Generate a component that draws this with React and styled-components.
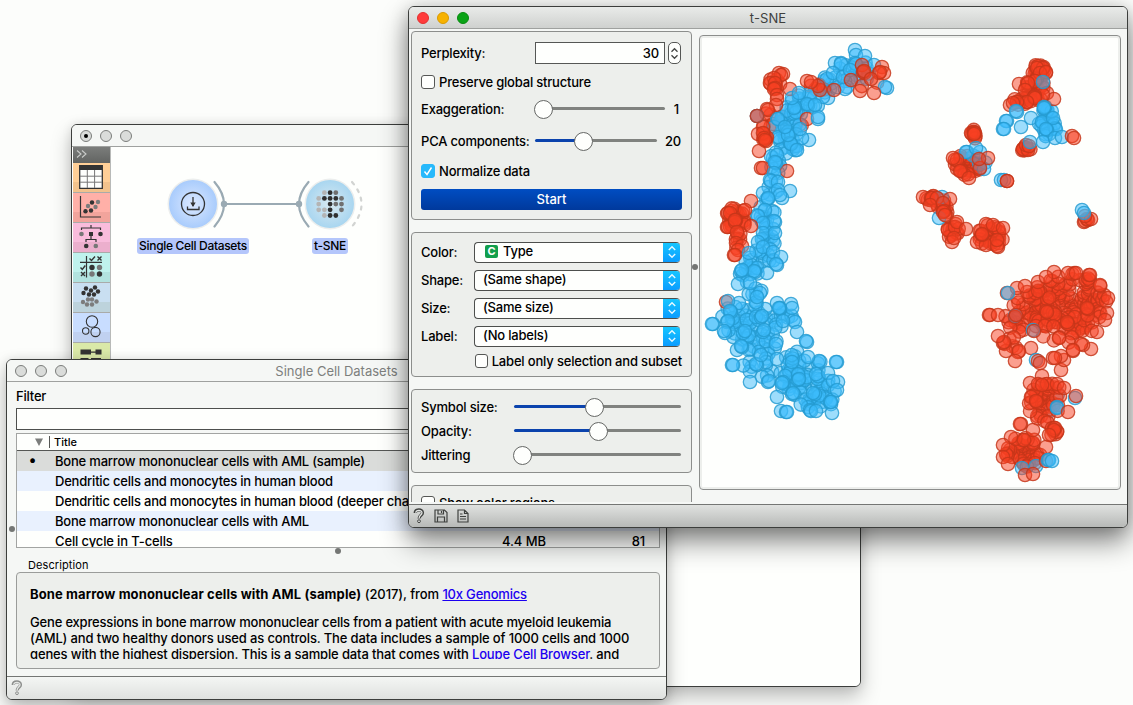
import React from "react";
import styled, { createGlobalStyle } from "styled-components";

const GlobalStyle = createGlobalStyle`
  * { box-sizing: border-box; }
  html, body { margin: 0; height: 100%; overflow: hidden; }
  body {
    background: #fcfdfb;
    color: #000;
    font: 500 13px/16px Inter, "Liberation Sans", sans-serif;
    letter-spacing: -0.2px;
  }
`;

const Desktop = styled.main`
  position: relative;
  width: 1133px;
  height: 705px;
  overflow: hidden;
`;

const Window = styled.section`
  position: absolute;
  left: ${(p) => p.$x}px;
  top: ${(p) => p.$y}px;
  width: ${(p) => p.$w}px;
  height: ${(p) => p.$h}px;
  display: flex;
  flex-direction: column;
  border: 1px solid #3c3e3c;
  border-radius: 6px;
  background: #f5f7f5;
  overflow: hidden;
  box-shadow: ${(p) =>
    p.$active ? "0 14px 28px rgba(0,0,0,.46), 0 2px 18px rgba(0,0,0,.2)" : "0 10px 20px rgba(0,0,0,.25), 0 0 10px rgba(0,0,0,.1)"};
`;

const TitleBar = styled.header`
  position: relative;
  display: flex;
  align-items: center;
  flex: none;
  height: 22px;
  gap: 8px;
  padding-left: 8px;
  border-bottom: 1px solid #9fa19f;
  background: ${(p) => (p.$active ? "linear-gradient(#e9ebe9, #cfd1cf)" : "#f5f7f5")};
`;

const Light = styled.i`
  display: grid;
  place-items: center;
  width: 12px;
  height: 12px;
  border-radius: 50%;
  background: ${(p) => p.$color || "#dadcda"};
  border: 1px solid ${(p) => p.$edge || "#7b7d7b"};
  &::after {
    content: "";
    width: 4px;
    height: 4px;
    border-radius: 50%;
    background: ${(p) => (p.$dot ? "#000" : "transparent")};
  }
`;

const WindowTitle = styled.h1`
  position: absolute;
  inset: 3px 0 0;
  margin: 0;
  text-align: center;
  font-size: 13px;
  font-weight: 400;
  letter-spacing: ${(p) => p.$track || 0}px;
  color: ${(p) => (p.$dim ? "#7d7f7d" : "#3e403e")};
`;

/* Workflow window */
const WorkArea = styled.div`
  display: flex;
  flex: 1;
  padding-left: 1px;
  background: #fefffd;
`;
const ToolDock = styled.nav`
  width: 38px;
  border-right: 1px solid #b8bab8;
`;
const Expander = styled.div`
  height: 16px;
  padding: 3px 0 0 3px;
  background: linear-gradient(#7b7d7b, #626462);
  svg { display: block; }
`;
const ToolButton = styled.div`
  display: grid;
  place-items: center;
  height: 30px;
  padding: 0 2px 1px 0;
  border-bottom: 1px solid #a9aba9;
  background: ${(p) => `linear-gradient(${p.$a} 0 66%, ${p.$b} 66%)`};
  svg { display: block; }
`;
const Workflow = styled.div`
  position: relative;
  flex: 1;
`;
const LinkArt = styled.svg`
  display: block;
`;
const NodeLabel = styled.span`
  position: absolute;
  top: 91px;
  left: ${(p) => p.$x}px;
  width: ${(p) => p.$w}px;
  height: 16px;
  line-height: 15px;
  border-radius: 3px;
  background: #b4c6fb;
  text-align: center;
  white-space: nowrap;
  font-size: 12px;
  letter-spacing: ${(p) => p.$track}px;
`;

/* Datasets window */
const DataBody = styled.div`
  position: relative;
  display: flex;
  flex-direction: column;
  flex: 1;
  padding: 6px 6px 0 9px;
`;
const FilterInput = styled.div`
  height: 22px;
  margin-top: 4px;
  border: 1px solid #4d4f4d;
  background: #fefffd;
`;
const FilterLabel = styled.label`
  height: 16px;
`;
const Table = styled.div`
  height: 115px;
  margin-top: 3px;
  border: 1px solid #a2a4a2;
  background: #fefffd;
  overflow: hidden;
`;
const TableHead = styled.div`
  display: flex;
  align-items: center;
  height: 17px;
  padding-left: 18px;
  font-size: 11px;
  letter-spacing: 0;
  border-bottom: 1px solid #555755;
  svg { margin-right: 6px; }
  span { border-left: 1px solid #555755; padding-left: 4px; line-height: 12px; }
`;
const TableRow = styled.div`
  display: grid;
  grid-template-columns: 38px 447px 105px 38px;
  height: 20px;
  line-height: 20px;
  background: ${(p) => p.$bg || "transparent"};
  white-space: nowrap;
  b { padding-left: 12px; line-height: 18px; font-size: 15px; }
  em { font-style: normal; text-align: right; }
`;
const Grip = styled.i`
  position: absolute;
  width: 6px;
  height: 6px;
  border-radius: 50%;
  background: #747674;
  left: ${(p) => p.$x}px;
  top: ${(p) => p.$y}px;
`;
const Caption = styled.div`
  height: 13px;
  margin: 11px 0 0 12px;
  font-size: 11px;
  line-height: 13px;
  font-weight: 400;
  letter-spacing: 0.1px;
`;
const Description = styled.div`
  height: 97px;
  border: 1px solid #9a9c9a;
  border-radius: 4px;
  background: #edefec;
  padding: 13px 13px 9px;
  div { height: 73px; overflow: hidden; white-space: nowrap; }
  p { margin: 0 0 12px; }
  b { font-weight: 700; letter-spacing: 0.12px; }
  a { color: #1b00f0; }
`;
const Tracked = styled.span`
  letter-spacing: ${(p) => p.$t}px;
`;
const StatusBar = styled.footer`
  display: flex;
  align-items: center;
  flex: none;
  height: ${(p) => p.$h}px;
  padding-left: 4px;
  gap: 9px;
  border-top: 1px solid #747674;
  background: ${(p) => (p.$active ? "linear-gradient(#e0e2e0, #b7b9b7)" : "linear-gradient(#f4f6f4, #dfe1df)")};
`;

/* t-SNE window */
const PlotBody = styled.div`
  position: relative;
  display: flex;
  flex: 1;
  min-height: 0;
  padding: 2px 6px 0 2px;
`;
const Controls = styled.aside`
  display: flex;
  flex-direction: column;
  gap: 12px;
  width: 281px;
  height: 471px;
  overflow: hidden;
`;
const Group = styled.div`
  flex: none;
  height: ${(p) => p.$h}px;
  padding: ${(p) => p.$top}px 9px 0;
  border: 1px solid #8c8e8c;
  border-radius: 4px;
  background: #edefec;
`;
const Row = styled.div`
  display: flex;
  align-items: center;
  height: ${(p) => p.$h}px;
  padding-left: ${(p) => p.$indent || 0}px;
  white-space: nowrap;
`;
const Label = styled.label`
  width: ${(p) => p.$w}px;
  flex: none;
`;
const NumberInput = styled.div`
  width: 130px;
  height: 22px;
  padding-right: 5px;
  border: 1px solid #555755;
  background: #fefffd;
  text-align: right;
  line-height: 20px;
`;
const Stepper = styled.div`
  display: grid;
  place-items: center;
  width: 13px;
  height: 22px;
  margin-left: 3px;
  border: 1px solid #555755;
  border-radius: 5px;
  background: #fefffd;
`;
const Check = styled.i`
  display: grid;
  place-items: center;
  width: 14px;
  height: 14px;
  margin-right: 4px;
  border-radius: 3px;
  border: 1px solid ${(p) => (p.$on ? "#27b9fb" : "#555755")};
  background: ${(p) => (p.$on ? "#27b9fb" : "#fefffd")};
`;
const Track = styled.div`
  position: relative;
  width: ${(p) => p.$w}px;
  height: 3px;
  margin-bottom: 1px;
  border-radius: 2px;
  background: ${(p) => `linear-gradient(90deg, #0b43ad ${p.$at}px, #80827f ${p.$at}px)`};
  &::after {
    content: "";
    position: absolute;
    left: ${(p) => p.$at - 8}px;
    top: -7px;
    width: 17px;
    height: 17px;
    border-radius: 50%;
    border: 1px solid #656765;
    background: #fefffd;
  }
`;
const Value = styled.span`
  flex: 1;
  text-align: right;
  padding-right: ${(p) => p.$pr}px;
`;
const StartButton = styled.button`
  display: block;
  width: 261px;
  height: 21px;
  margin: 9px 0 0;
  padding: 0 0 2px;
  border: 0;
  border-radius: 3px;
  background: linear-gradient(#004dc2, #00399c);
  color: #fff;
  font: inherit;
  letter-spacing: 0;
`;
const Select = styled.div`
  display: flex;
  align-items: center;
  justify-content: space-between;
  width: 206px;
  height: 21px;
  border: 1px solid #4d4f4d;
  border-right: 0;
  border-radius: 4px;
  background: #fefffd;
  padding-left: 8px;
  overflow: hidden;
  span { display: flex; gap: 5px; align-items: center; padding-bottom: 2px; }
`;
const SelectArrows = styled.i`
  display: grid;
  place-items: center;
  width: 17px;
  height: 21px;
  flex: none;
  margin: -1px 0;
  background: linear-gradient(#16c8ff, #0a9aff);
`;
const ClassBadge = styled.b`
  display: grid;
  place-items: center;
  width: 13px;
  height: 13px;
  margin-left: 2px;
  border-radius: 2px;
  background: #129f4c;
  color: #fff;
  font-size: 11px;
  line-height: 13px;
`;
const PlotFrame = styled.div`
  width: 422px;
  height: 455px;
  margin: 4px 0 0 7px;
  border: 1px solid #8c8e8c;
  border-radius: 4px;
  box-shadow: inset 0 0 0 2px #edefec;
  background: #fefffd;
  overflow: hidden;
  svg { display: block; }
`;

function makeRandom(seed) {
  let s = seed;
  return () => {
    s = (s * 16807) % 2147483647;
    return s / 2147483647;
  };
}

/* color, centre x, centre y, radius x, radius y, rotation in degrees, count */
const CLOUDS = [
  ["r", 774, 84, 6, 8, 10, 6],
  ["b", 855, 72, 17, 12, -10, 16],
  ["r", 868, 78, 13, 10, 0, 3],
  ["b", 829, 84, 13, 8, -30, 9],
  ["r", 818, 87, 8, 5, 0, 4],
  ["r", 788, 123, 15, 8, 0, 5],
  ["b", 803, 105, 17, 11, -15, 20],
  ["r", 769, 120, 6, 18, 5, 5],
  ["b", 787, 123, 14, 14, 0, 18],
  ["b", 788, 142, 12, 12, 0, 18],
  ["r", 765, 136, 3, 5, 0, 4],
  ["b", 776, 163, 6, 12, 0, 10],
  ["b", 771, 190, 7, 13, 10, 5],
  ["b", 766, 214, 9, 11, 0, 9],
  ["b", 768, 236, 9, 12, 0, 11],
  ["r", 736, 218, 11, 11, -20, 22],
  ["r", 738, 238, 3, 12, 0, 6],
  ["b", 761, 258, 17, 10, -25, 13],
  ["b", 749, 272, 11, 11, 0, 10],
  ["b", 755, 295, 7, 11, 0, 6],
  ["b", 758, 316, 37, 14, 5, 30],
  ["b", 752, 332, 26, 18, 15, 26],
  ["b", 770, 350, 37, 12, 22, 18],
  ["b", 771, 370, 30, 13, 15, 16],
  ["b", 808, 370, 27, 14, 20, 16],
  ["b", 808, 386, 29, 14, 12, 28],
  ["b", 816, 402, 17, 8, 0, 13],
  ["r", 1039, 72, 7, 8, 0, 22],
  ["r", 1034, 90, 11, 13, 30, 26],
  ["r", 1022, 101, 10, 4, 0, 9],
  ["b", 1047, 122, 9, 16, -10, 26],
  ["r", 1026, 149, 5, 2, 0, 7],
  ["r", 974, 134, 3, 5, 0, 8],
  ["r", 967, 165, 14, 11, 5, 26],
  ["b", 977, 160, 9, 9, 0, 3],
  ["r", 936, 201, 12, 5, 25, 13],
  ["r", 945, 210, 3, 7, -10, 8],
  ["r", 953, 230, 6, 9, 0, 11],
  ["r", 990, 236, 13, 11, 10, 28],
  ["r", 1068, 303, 39, 30, -8, 112],
  ["r", 1030, 312, 27, 21, -15, 42],
  ["r", 1070, 329, 30, 13, -15, 16],
  ["r", 1011, 343, 10, 6, 40, 5],
  ["b", 1052, 400, 12, 12, 0, 3],
  ["r", 1045, 402, 16, 23, 20, 38],
  ["b", 1030, 462, 10, 5, 0, 3],
  ["r", 1024, 452, 19, 15, 0, 38],
  ["r", 1054, 431, 4, 6, 0, 6],
];

const POINTS = [
  ["b", "855,50 856,55 865,56 855,63 856,64 835,63 841,63 841,64 874,65 827,79 833,73 847,87 845,89 843,77 850,70 887,88 885,87 828,98 823,97"],
  ["r", "862,65 863,72 864,71 882,67 884,73 879,73 880,72 851,80 871,79 874,93 860,91 834,90 820,90 818,86 807,81 811,82 790,89 779,73 783,74 781,75 774,78 770,83 775,83 775,88 774,89 777,95 777,99 776,105 767,109 768,110 757,116 763,127 758,134 763,133 764,138 766,141 765,140 759,151 761,168 763,168 787,171 751,201 807,119"],
  ["b", "757,116 818,119 818,117 809,140 802,138 790,143 791,144 788,135 800,129 808,105 807,104 795,107 794,108 792,98 799,93 815,105 778,119 785,127 797,150 777,155 776,163 775,162 774,173 770,180 771,181 778,182 790,191 778,190 782,198 780,195 763,193 768,199 768,198 765,210 758,216 775,222 774,221 763,223 763,233 775,233 758,242 763,247 773,252 781,257 777,265 776,264 767,273 755,272 754,271 741,271 742,270 738,284 750,283 760,293 757,297"],
  ["r", "757,116 728,213 730,213 736,220 745,210 727,227 728,227 735,222 735,220 737,232 736,243 742,246 738,250 734,255 735,255 751,226 726,302"],
  ["b", "749,253 739,303 728,301 777,303 791,304 792,308 780,308 779,308 731,312 730,311 713,324 712,324 727,322 728,321 725,333 724,331 795,322 783,321 797,332 807,342 806,341 732,365 733,365 750,382 768,382 769,381 777,397 781,411 786,412 787,412 832,413 810,410 811,411 837,362 836,362 819,361 828,373 838,382 833,381 837,390 830,402 831,402 815,394 813,393 792,394 793,393 798,380 799,379 808,357 792,362 737,350 742,347 741,346 762,316 763,332 776,344 777,359 757,365 756,364 761,355 783,382 782,383 764,330 745,331 816,411"],
  ["r", "1038,66 1043,68 1037,68 1040,73 1046,72 1035,81 1019,84 1028,83 1025,90 1047,93 1054,99 1043,95 1035,96 1034,97 1035,98 1027,102 1017,102 1010,105 1013,103"],
  ["b", "1043,82 1044,107 1044,108 1017,112 1016,111 1007,121 1006,121 1003,129 1004,129 1021,127 1031,118 1042,122 1053,118 1047,130 1046,129 1043,142 1055,138 1062,137"],
  ["r", "1072,136 1074,138 1023,149 1028,150 1026,145 1029,146"],
  ["b", "1030,142 967,152 966,152 980,152 976,148 984,169"],
  ["r", "974,132 975,133 974,134 957,160 953,158 961,171 960,171 969,178 988,158 980,168 979,159"],
  ["b", "1001,180 1004,180 942,197 939,218"],
  ["r", "1007,181 1007,181 923,197 931,198 932,198 937,198 930,205 950,199 943,203 944,211 943,212 945,215 948,230 955,227 957,222 966,229 952,242 954,238 986,224 993,225 1003,228 977,242 986,245 998,247 997,246 982,235 982,234 997,240 1084,222 1085,221 1088,220 1087,219 1091,219 1085,216"],
  ["b", "1082,210 1084,213"],
  ["r", "1054,272 1068,273 1076,273 1089,275 1090,275 1100,285 1108,298 1107,313 1105,320 1097,332 1091,349 1083,345 1081,344 1073,351 1073,350 1061,370 1064,360 1061,356 1053,358 1055,358 1059,338 1031,348 1018,352 1019,351 1015,361 1006,351 1003,343 1004,342 998,336 989,315 990,315 998,315 1007,293 1017,288 1025,286 1038,282 1046,277 1068,324 1067,322 1046,311 1047,312 1088,309 1087,308"],
  ["b", "1008,293 1033,330 1036,360 1015,316"],
  ["r", "1034,331 1015,317 1016,315 1038,361 1040,363 1042,376 1030,383 1038,384 1047,384 1042,385 1057,384 1064,388 1031,397 1037,402 1036,401"],
  ["b", "1075,398 1057,407 1057,408 1022,468 1036,466"],
  ["r", "1076,396 1068,412 1021,424 1020,424 1033,430 1057,432 1055,428 1054,430 1049,435 1011,437 1024,440 1003,445 1003,457 1008,464 1025,475 1033,474 1046,447 1046,461"],
  ["b", "1048,460 1049,460 1052,461"],
];

function buildPoints() {
  const random = makeRandom(4711);
  const cloudPoints = CLOUDS.flatMap(([color, cx, cy, rx, ry, turn, count]) => {
    const a = (turn * Math.PI) / 180;
    const phase = random() * Math.PI * 2;
    return Array.from({ length: count }, (_, i) => {
      const r = Math.sqrt(Math.max(0.01, (i + 0.5 + (random() - 0.5) * 1.4) / count));
      const t = phase + i * 2.39996 + (random() - 0.5) * 1.1;
      const u = rx * r * Math.cos(t);
      const v = ry * r * Math.sin(t);
      return [color, cx + u * Math.cos(a) - v * Math.sin(a), cy + u * Math.sin(a) + v * Math.cos(a)];
    });
  });
  const fixed = POINTS.flatMap(([color, list]) =>
    list.split(" ").map((pair) => [color, ...pair.split(",").map(Number)])
  );
  return [...cloudPoints, ...fixed];
}
const ALL_POINTS = buildPoints();

const Scatter = () => (
  <svg width="420" height="453" viewBox="700 36 420 453" strokeWidth="1.3">
    {ALL_POINTS.map(([color, x, y], i) => (
      <circle
        key={i}
        cx={x}
        cy={y}
        r="6.7"
        fill={color === "r" ? "#f84022" : "#3cbcfb"}
        fillOpacity="0.5"
        stroke={color === "r" ? "#c4361a" : "#259bd1"}
        strokeOpacity="0.82"
      />
    ))}
  </svg>
);

const Dots = ({ r, list, fill }) => list.map(([x, y], i) => <circle key={i} cx={x} cy={y} r={r} fill={fill} />);

const TableIcon = () => (
  <svg width="24" height="24" viewBox="0 0 24 24">
    <path d="M.7.7h22.6v22.6H.7z" fill="#fefffd" stroke="#333" strokeWidth="1.3" />
    <path d="M.5.5h23v4.6H.5z" fill="#333" />
    <path d="M8.3 5v18M15.6 5v18M1 11.2h22M1 17.2h22" stroke="#777" />
  </svg>
);
const ScatterIcon = () => (
  <svg width="24" height="24" viewBox="0 0 24 24">
    <path d="M1.5 1v21H22" fill="none" stroke="#333" strokeWidth="1.2" />
    <Dots r={2.2} fill="#333" list={[[13, 7.5], [6.5, 16.3], [12, 15.5]]} />
    <Dots r={2.2} fill="#7c7c7c" list={[[19, 7], [9, 11], [16.5, 12]]} />
  </svg>
);
const TreeIcon = () => (
  <svg width="26" height="26" viewBox="0 0 26 26">
    <path d="M3.5 6V4h19v2M13 1v3M13 12v4M8 18v-2.5h10V18" fill="none" stroke="#333" strokeWidth="1.2" />
    <path d="M11 8h4v4h-4z" fill="#333" />
    <Dots r={2.3} fill="#333" list={[[22.5, 10], [8.2, 22]]} />
    <Dots r={2.3} fill="#777" list={[[3.5, 10], [17.8, 22]]} />
  </svg>
);
const ConfusionIcon = () => (
  <svg width="26" height="26" viewBox="0 1 26 26" fill="none" stroke="#333" strokeWidth="1.2">
    <path d="M2 9.3h22M8.5 3v21.5" />
    <path d="M11.5 5.5l2 2 3.5-4M2.5 14.5l1.8 2 3-4M19.5 3.5l4 4M23.5 3.5l-4 4M3 19l4 4M7 19l-4 4" strokeWidth="1.4" />
    <g stroke="none">
      <Dots r={2.7} fill="#333" list={[[14, 14.5], [21.5, 21]]} />
      <Dots r={2.7} fill="#777" list={[[21.5, 14.5], [14, 21]]} />
    </g>
  </svg>
);
const ClusterIcon = () => (
  <svg width="24" height="24" viewBox="0 0.5 24 24">
    <Dots r={2.2} fill="#333" list={[[7, 4], [16, 3], [4.5, 8.5], [12, 6], [19, 7], [10, 10], [15, 10]]} />
    <Dots r={2.2} fill="#7c7c7c" list={[[9, 15], [13, 15], [4, 17.5], [8, 20], [13, 20], [17.5, 17]]} />
  </svg>
);
const CirclesIcon = () => (
  <svg width="24" height="24" viewBox="0 1 24 24" fill="none" stroke="#333" strokeWidth="1.1">
    <circle cx="13" cy="7.5" r="5.7" /><circle cx="6.7" cy="17" r="3.2" /><circle cx="16.5" cy="18" r="4.6" />
  </svg>
);
const BlocksIcon = () => (
  <svg width="24" height="24" viewBox="0 0 24 24" fill="#333">
    <path d="M1.5 4.500h10.500v5h-10.500zM12 6.500h5v1.200h-5zM16.500 4.500h6v5h-6zM1.500 13h8v5h-8zM12 13h10v5H12z" />
  </svg>
);

const TOOLS = [
  ["#ffcf97", "#f2c28c", TableIcon],
  ["#ffb0a8", "#f2a49c", ScatterIcon],
  ["#f9bcdc", "#ecafcd", TreeIcon],
  ["#bff2ed", "#b2e3df", ConfusionIcon],
  ["#c9dff1", "#bdd3dc", ClusterIcon],
  ["#c8ddff", "#c0d1f0", CirclesIcon],
  ["#dae9a8", "#cddd9c", BlocksIcon],
];

const TSNE_DOTS = [
  ["#b4b4b4", [[0, 1], [0, 2], [0, 3], [1, 0], [1, 3], [1, 4]]],
  ["#303030", [[1, 1], [2, 0], [2, 1], [2, 2], [2, 3], [2, 4], [3, 1], [3, 4]]],
  ["#707070", [[3, 0], [3, 2], [4, 1], [4, 2], [4, 3]]],
];

const WorkflowArt = () => (
  <LinkArt width="290" height="110" viewBox="111 147 290 110">
    <defs>
      <radialGradient id="source"><stop offset="0" stopColor="#dbe8ff" /><stop offset="1" stopColor="#a9ccfc" /></radialGradient>
      <radialGradient id="embed"><stop offset="0" stopColor="#d8e9f1" /><stop offset="1" stopColor="#a9d6f0" /></radialGradient>
    </defs>
    <g fill="none" stroke="#9aaab3" strokeWidth="2.2" strokeLinecap="round">
      <path d="M224 204h75" strokeWidth="1.8" />
      <path d="M214.500 182q19 22 0 44.500M308.500 182q-19 22 0 44.500" />
      <path d="M352 182q19 22 0 44.500" stroke="#d2d4d2" strokeDasharray="3 6" />
    </g>
    <Dots r={3.2} fill="#9aaab3" list={[[224, 204], [299, 204]]} />
    <circle cx="193" cy="204" r="25.500" fill="#eceeed" />
    <circle cx="193" cy="204" r="24" fill="url(#source)" />
    <circle cx="330" cy="204" r="25.500" fill="#eceeed" />
    <circle cx="330" cy="204" r="24" fill="url(#embed)" />
    <circle cx="193" cy="204" r="11.500" fill="none" stroke="#333" strokeWidth="1.3" />
    <path d="M193 197v9M187.500 206.500v3h11.500v-3" fill="none" stroke="#333" strokeWidth="1.3" />
    <path d="M190.300 202.500h5.400l-2.700 4.500z" fill="#333" />
    {TSNE_DOTS.map(([fill, list]) => (
      <Dots key={fill} r={2.4} fill={fill} list={list.map(([c, r]) => [318.700 + c * 5.700, 192.700 + r * 5.700])} />
    ))}
  </LinkArt>
);

const HelpIcon = ({ color }) => (
  <svg width="12" height="16" viewBox="0 0 12 16" fill="none">
    <path d="M2.200 5C2.200 0.800 9.500 0.800 9.500 4.700 9.500 7.200 6.100 7.300 6.100 10.500" stroke={color} strokeWidth="3.200" />
    <path d="M2.700 4.800C3 1.700 9 1.700 9 4.700 9 7 6.100 7.200 6.100 10.200" stroke="#e4e6e4" strokeWidth="1.300" />
    <circle cx="6" cy="13.200" r="1.400" fill="#e4e6e4" stroke={color} />
  </svg>
);
const SaveIcon = () => (
  <svg width="14" height="14" viewBox="0 0 14 14" fill="none" stroke="#3f413f" strokeWidth="1.200">
    <path d="M1 1h9.500L13 3.500V13H1zM4 1v4h5.500V1M3.500 13V8h7v5M7.500 2v2" />
  </svg>
);
const ReportIcon = () => (
  <svg width="12" height="14" viewBox="0 0 12 14" fill="none" stroke="#3f413f" strokeWidth="1.200">
    <path d="M1 1h6.500L11 4.500V13H1zM7.500 1v3.500H11M3 5h2.500M3 7.500h6M3 10h6" />
  </svg>
);
const ArrowPair = ({ color, w, h }) => (
  <svg width={w} height={h} viewBox="0 0 9 13" fill="none" stroke={color} strokeWidth="1.300">
    <path d="M1.500 4.700l3-3 3 3M1.500 8.300l3 3 3-3" />
  </svg>
);

const SelectRow = ({ label, value, badge }) => (
  <Row $h={28}>
    <Label $w={53}>{label}</Label>
    <Select>
      <span>{badge && <ClassBadge>{badge}</ClassBadge>}{value}</span>
      <SelectArrows><ArrowPair color="#e6f8ff" w={10} h={14} /></SelectArrows>
    </Select>
  </Row>
);

const WorkflowWindow = () => (
  <Window $x={71} $y={124} $w={790} $h={563}>
    <TitleBar><Light $dot /><Light /><Light /></TitleBar>
    <WorkArea>
      <ToolDock>
        <Expander>
          <svg width="12" height="8" viewBox="0 0 12 8" fill="none" stroke="#c9cbc9" strokeWidth="1.100"><path d="M1 .5L5 4 1 7.500M6 .5L10 4 6 7.500" /></svg>
        </Expander>
        {TOOLS.map(([a, b, Icon]) => <ToolButton key={a} $a={a} $b={b}><Icon /></ToolButton>)}
      </ToolDock>
      <Workflow>
        <WorkflowArt />
        <NodeLabel $x={26} $w={112} $track={-0.32}>Single Cell Datasets</NodeLabel>
        <NodeLabel $x={201} $w={36} $track={-0.25}>t-SNE</NodeLabel>
      </Workflow>
    </WorkArea>
  </Window>
);

const DatasetsWindow = () => (
  <Window $x={6} $y={359} $w={661} $h={341}>
    <TitleBar><Light /><Light /><Light /><WindowTitle $dim>Single Cell Datasets</WindowTitle></TitleBar>
    <DataBody>
      <FilterLabel>Filter</FilterLabel>
      <FilterInput />
      <Table>
        <TableHead>
          <svg width="8" height="8" viewBox="0 0 8 8"><path d="M0 .5h8L4 8z" fill="#7c7e7c" /></svg>
          <span>Title</span>
        </TableHead>
        <TableRow $bg="#dadcda"><b>•</b>Bone marrow mononuclear cells with AML (sample)</TableRow>
        <TableRow $bg="#e9f1fe"><b />Dendritic cells and monocytes in human blood</TableRow>
        <TableRow><b />Dendritic cells and monocytes in human blood (deeper cha</TableRow>
        <TableRow $bg="#e9f1fe"><b />Bone marrow mononuclear cells with AML</TableRow>
        <TableRow><b /><Tracked $t={-0.13}>Cell cycle in T-cells</Tracked><Tracked $t={-0.1}>4.4 MB</Tracked><em>81</em></TableRow>
      </Table>
      <Caption>Description</Caption>
      <Description>
        <div>
          <p><b>Bone marrow mononuclear cells with AML (sample)</b><Tracked $t={-0.07}> (2017), from </Tracked><a href="#source">10x Genomics</a></p>
          <Tracked $t={-0.18}>Gene expressions in bone marrow mononuclear cells from a patient with acute myeloid leukemia</Tracked><br />
          <Tracked $t={-0.15}>(AML) and two healthy donors used as controls. The data includes a sample of 1000 cells and 1000</Tracked><br />
          <Tracked $t={-0.145}>genes with the highest dispersion. This is a sample data that comes with <a href="#browser">Loupe Cell Browser</a>. and</Tracked>
        </div>
      </Description>
      <Grip $x={2} $y={144} />
      <Grip $x={328} $y={166} />
    </DataBody>
    <StatusBar $h={23}><HelpIcon color="#8d8f8d" /></StatusBar>
  </Window>
);

const TsneWindow = () => (
  <Window $active $x={408} $y={6} $w={720} $h={522}>
    <TitleBar $active>
      <Light $color="#ff3b3b" $edge="#e22f2f" />
      <Light $color="#f7b200" $edge="#d99a00" />
      <Light $color="#0aa316" $edge="#078a10" />
      <WindowTitle $track={0.1}>t-SNE</WindowTitle>
    </TitleBar>
    <PlotBody>
      <Controls>
        <Group $h={189} $top={8}>
          <Row $h={26}>
            <Label $w={114}>Perplexity:</Label>
            <NumberInput>30</NumberInput>
            <Stepper><ArrowPair color="#444644" w={9} h={15} /></Stepper>
          </Row>
          <Row $h={32}><Check />Preserve global structure</Row>
          <Row $h={22}><Label $w={114}>Exaggeration:</Label><Track $w={130} $at={7} /><Value $pr={3}>1</Value></Row>
          <Row $h={42}><Label $w={114}>PCA components:</Label><Track $w={122} $at={47} /><Value $pr={1}>20</Value></Row>
          <Row $h={18}>
            <Check $on><svg width="10" height="10" viewBox="0 0 10 10"><path d="M1.500 5.500l2.500 3L8.500 1.500" fill="none" stroke="#fff" strokeWidth="1.400" /></svg></Check>
            Normalize data
          </Row>
          <StartButton>Start</StartButton>
        </Group>
        <Group $h={145} $top={5}>
          <SelectRow label="Color:" value="Type" badge="C" />
          <SelectRow label="Shape:" value="(Same shape)" />
          <SelectRow label="Size:" value="(Same size)" />
          <SelectRow label="Label:" value="(No labels)" />
          <Row $h={22} $indent={54}><Check /><Tracked $t={-0.17}>Label only selection and subset</Tracked></Row>
        </Group>
        <Group $h={84} $top={5}>
          <Row $h={24}><Label $w={93}>Symbol size:</Label><Track $w={167} $at={79} /></Row>
          <Row $h={24}><Label $w={93}>Opacity:</Label><Track $w={167} $at={83} /></Row>
          <Row $h={24}><Label $w={93}>Jittering</Label><Track $w={167} $at={7} /></Row>
        </Group>
        <Group $h={60} $top={9}>
          <Row $h={16}><Check />Show color regions</Row>
        </Group>
      </Controls>
      <PlotFrame><Scatter /></PlotFrame>
      <Grip $x={283} $y={235} />
    </PlotBody>
    <StatusBar $active $h={23}><HelpIcon color="#3f413f" /><SaveIcon /><ReportIcon /></StatusBar>
  </Window>
);

export default function App() {
  return (
    <>
      <GlobalStyle />
      <Desktop>
        <WorkflowWindow />
        <DatasetsWindow />
        <TsneWindow />
      </Desktop>
    </>
  );
}
